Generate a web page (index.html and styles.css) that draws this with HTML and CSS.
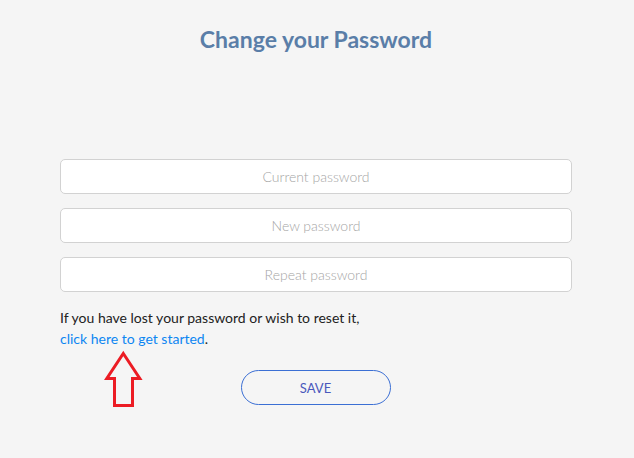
FILE: index.html
```html
<!DOCTYPE html>
<html lang="en">
<head>
<meta charset="utf-8">
<title>Change your Password</title>
<link rel="stylesheet" href="styles.css">
</head>
<body>
<main class="page">
  <h1 class="title">Change your Password</h1>
  <form class="form">
    <input class="field" type="password" placeholder="Current password">
    <input class="field" type="password" placeholder="New password">
    <input class="field" type="password" placeholder="Repeat password">
    <p class="help">If you have lost your password or wish to reset it,<br><a class="link" href="#">click here to get started</a>.</p>
    <div class="actions">
      <button class="save" type="button">SAVE</button>
    </div>
  </form>
  <svg class="arrow" width="40" height="60" viewBox="0 0 40 60" aria-hidden="true">
    <polygon points="19.3,3.5 35.8,28.5 28.5,28.5 28.5,55.5 10.5,55.5 10.5,28.5 2.8,28.5" fill="none" stroke="#ec1c24" stroke-width="3" stroke-linejoin="miter"/>
  </svg>
</main>
</body>
</html>
```

FILE: styles.css
```css
* { box-sizing: border-box; }
html, body { margin: 0; padding: 0; }
body {
  background: #f5f5f5;
  font-family: Lato, "Open Sans", "Liberation Sans", sans-serif;
  width: 634px;
  height: 458px;
  overflow: hidden;
}
.page {
  position: relative;
  padding: 25px 62px 0 60px;
}
.title {
  margin: 0;
  text-align: center;
  font-size: 23px;
  line-height: 29px;
  font-weight: 700;
  color: #5a7ea8;
}
.form {
  margin-top: 105px;
  display: flex;
  flex-direction: column;
}
.field {
  display: block;
  width: 100%;
  height: 35px;
  margin: 0 0 14px 0;
  border: 1px solid #d2d2d2;
  border-radius: 5px;
  background: #fff;
  font-family: Lato, "Open Sans", sans-serif;
  font-size: 14px;
  font-weight: 300;
  text-align: center;
  color: #333;
  outline: none;
}
.field::placeholder { color: #a5a5a5; opacity: 1; }
.help {
  margin: 1px 0 0 0;
  font-size: 14px;
  line-height: 21px;
  color: #222;
}
.link { color: #0d86f2; text-decoration: none; }
.actions {
  display: flex;
  justify-content: center;
  margin-top: 21px;
}
.save {
  width: 150px;
  height: 35px;
  margin-left: -1px;
  border: 1px solid #3b6fd4;
  border-radius: 18px;
  background: transparent;
  font-family: Lato, "Open Sans", sans-serif;
  font-size: 13px;
  color: #4a58bc;
  padding: 0;
  cursor: pointer;
}
.arrow {
  position: absolute;
  left: 104px;
  top: 350px;
}
```
